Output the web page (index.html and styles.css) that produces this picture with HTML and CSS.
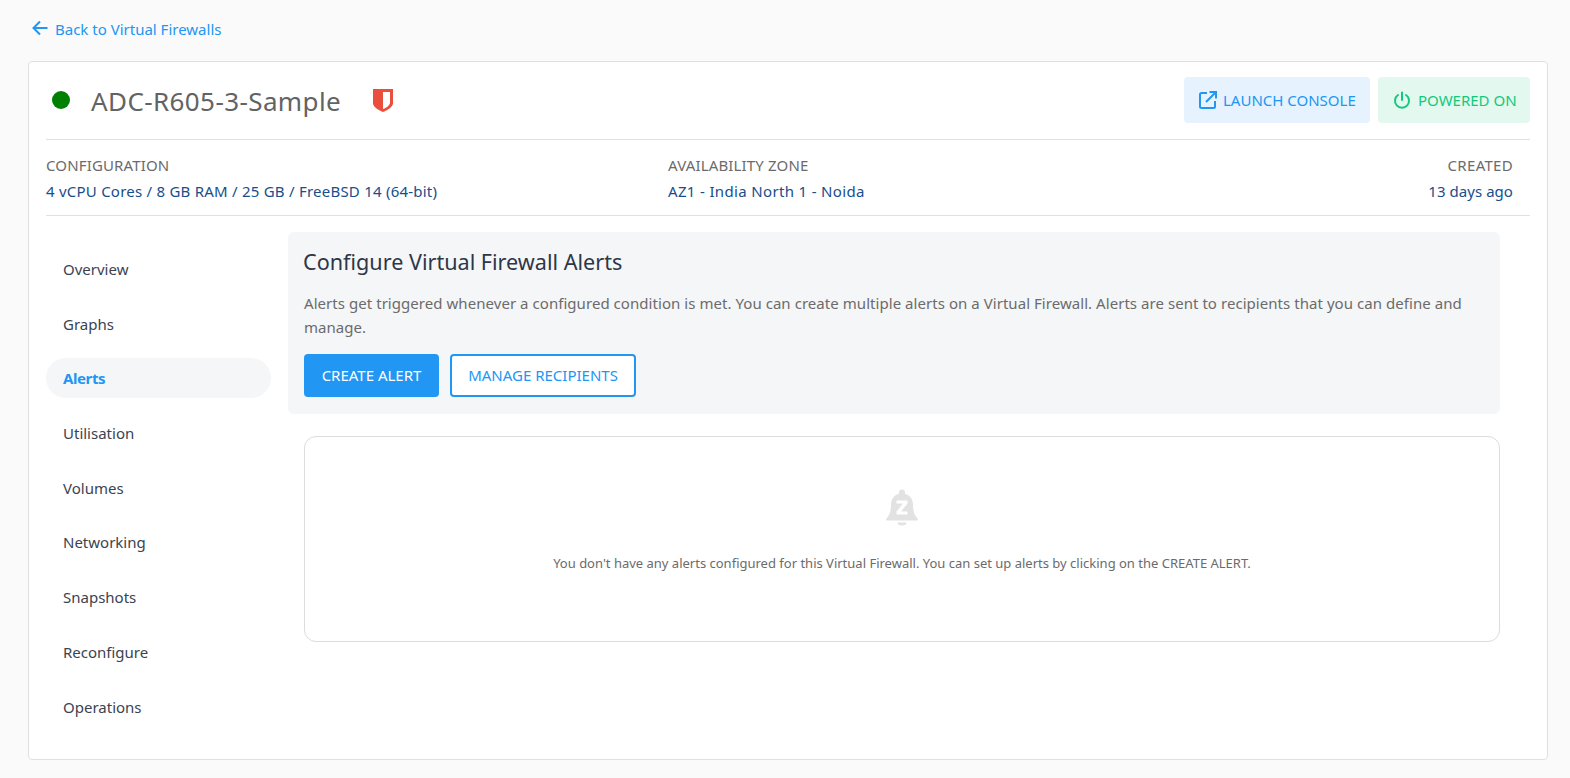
FILE: index.html
```html
<!DOCTYPE html>
<html lang="en">
<head>
<meta charset="utf-8">
<title>Alerts</title>
<link rel="stylesheet" href="styles.css">
</head>
<body>
<a class="back" href="#">
  <svg class="back-icon" viewBox="0 0 16 16" fill="none" stroke="currentColor" stroke-width="2"><path d="M15.500 8H1.500M8 1.500 1.500 8 8 14.500"/></svg>
  <span>Back to Virtual Firewalls</span>
</a>
<main class="card">
  <header class="head">
    <span class="dot"></span>
    <h1 class="name">ADC-R605-3-Sample</h1>
    <svg class="shield" viewBox="0 0 20 23"><path fill="#ea4f3d" d="M0 0h20v14c0 4-5 7-10 9C5 21 0 18 0 14z"/><path fill="#fff" d="M10 3h7v10.500c0 2.500-3 5-7 6.500z"/></svg>
    <div class="actions">
      <a class="pill pill-blue" href="#">
        <svg viewBox="0 0 18 18" fill="none" stroke="currentColor" stroke-width="2"><path d="M8 2H2.500A1.500 1.500 0 0 0 1 3.500v12A1.500 1.500 0 0 0 2.500 17h12a1.500 1.500 0 0 0 1.500-1.500V10M7 11 16 2M10.500 1H17v6.500"/></svg>
        LAUNCH CONSOLE
      </a>
      <a class="pill pill-green" href="#">
        <svg viewBox="0 0 18 18" fill="none" stroke="currentColor" stroke-width="2" stroke-linecap="round"><path d="M9 1.500V9M5 4a7 7 0 1 0 8 0"/></svg>
        POWERED ON
      </a>
    </div>
  </header>
  <section class="meta">
    <div class="meta-col meta-config"><div class="label">CONFIGURATION</div><div class="value">4 vCPU Cores / 8 GB RAM / 25 GB / FreeBSD 14 (64-bit)</div></div>
    <div class="meta-col meta-zone"><div class="label">AVAILABILITY ZONE</div><div class="value">AZ1 - India North 1 - Noida</div></div>
    <div class="meta-col meta-created"><div class="label">CREATED</div><div class="value">13 days ago</div></div>
  </section>
  <div class="body">
    <nav class="side">
      <a href="#">Overview</a>
      <a href="#">Graphs</a>
      <a href="#" class="active">Alerts</a>
      <a href="#">Utilisation</a>
      <a href="#">Volumes</a>
      <a href="#">Networking</a>
      <a href="#">Snapshots</a>
      <a href="#">Reconfigure</a>
      <a href="#">Operations</a>
    </nav>
    <div class="content">
      <section class="intro">
        <h2>Configure Virtual Firewall Alerts</h2>
        <p>Alerts get triggered whenever a configured condition is met. You can create multiple alerts on a Virtual Firewall. Alerts are sent to recipients that you can define and manage.</p>
        <div class="btns">
          <button class="btn btn-solid">CREATE ALERT</button>
          <button class="btn btn-line">MANAGE RECIPIENTS</button>
        </div>
      </section>
      <section class="empty">
        <svg class="bell" viewBox="0 0 32 36"><path fill="#e2e2e2" d="M16 0a3 3 0 0 1 3 3v1.200C24 5.500 27 10 27 15c0 7 1.500 11 4.500 14 .8.8.3 2-.8 2H1.300c-1.100 0-1.600-1.200-.8-2C3.500 26 5 22 5 15 5 10 8 5.500 13 4.200V3a3 3 0 0 1 3-3z"/><path fill="#e2e2e2" d="M11.500 33h9a4.500 3 0 0 1-9 0z"/><path fill="#fff" d="M10.500 11h11v3l-6.500 8h6.500v3h-11v-3l6.500-8h-6.500z"/></svg>
        <p>You don't have any alerts configured for this Virtual Firewall. You can set up alerts by clicking on the CREATE ALERT.</p>
      </section>
    </div>
  </div>
</main>
</body>
</html>
```
FILE: styles.css
```css
* { box-sizing: border-box; }
html, body { margin: 0; height: 100%; }
body {
  background: #fafafa;
  font-family: "Noto Sans", sans-serif;
  font-size: 15px;
  color: #6b6b6b;
  padding: 19px 22px 18px 28px;
  overflow: hidden;
}
a { text-decoration: none; color: inherit; }
.back {
  display: flex;
  align-items: center;
  gap: 7px;
  height: 20px;
  margin: 0 0 22px 4px;
  color: #2196f3;
}
.back-icon { width: 16px; height: 16px; margin-top: -2px; }
.card {
  height: 699px;
  background: #fff;
  border: 1px solid #e0e0e0;
  border-radius: 4px;
  padding: 15px 17px 0;
}
.head {
  display: flex;
  align-items: center;
  height: 63px;
  padding-bottom: 16px;
  border-bottom: 1px solid #e0e0e0;
}
.dot {
  width: 18px;
  height: 18px;
  border-radius: 50%;
  background: #008000;
  margin: -1px 0 0 6px;
}
.name {
  margin: 1px 0 0 21px;
  font-size: 26px;
  letter-spacing: 0.400px;
  font-weight: 400;
  line-height: 32px;
  color: #636363;
}
.shield { width: 20px; height: 23px; margin: 1px 0 0 32px; }
.actions { margin-left: auto; display: flex; gap: 8px; }
.pill {
  display: flex;
  align-items: center;
  height: 46px;
  border-radius: 4px;
}
.pill svg { width: 18px; height: 18px; }
.pill-blue { background: #e6f3fe; color: #2196f3; width: 186px; padding-left: 15px; gap: 6px; }
.pill-green { background: #e3f8ef; color: #12c97c; width: 152px; padding-left: 15px; gap: 7px; }
.meta {
  display: flex;
  height: 76px;
  padding: 15px 17px 0 0;
  border-bottom: 1px solid #e0e0e0;
}
.meta-col { line-height: 20px; }
.label { color: #6b6b6b; margin-bottom: 6px; letter-spacing: 0.150px; }
.value { color: #174e8c; letter-spacing: 0.230px; }
.meta-config { width: 622px; }
.meta-zone .value { letter-spacing: 0.340px; }
.meta-created { margin-left: auto; text-align: right; }
.meta-created .label { letter-spacing: 0.300px; }
.meta-created .value { letter-spacing: 0.050px; }
.body { display: flex; padding-top: 16px; }
.side { width: 225px; flex: none; display: flex; flex-direction: column; gap: 14.700px; padding-top: 17px; margin-right: 1px; }
.side a {
  display: flex;
  align-items: center;
  height: 40px;
  padding-left: 17px;
  border-radius: 20px;
  color: #3b4351;
}
.side a.active { background: #f5f6f8; color: #2196f3; font-weight: 700; letter-spacing: -0.400px; }
.content { width: 1212px; margin-left: 16px; }
.intro {
  background: #f5f6f8;
  border-radius: 6px;
  height: 182px;
  padding: 14px 16px 0;
}
.intro h2 {
  margin: 0 0 13px -1px;
  font-size: 21.600px;
  font-weight: 400;
  line-height: 32px;
  color: #2d3748;
}
.intro p { margin: 0 0 15px; line-height: 24px; color: #6b6b6b; letter-spacing: 0.050px; }
.btns { display: flex; gap: 11px; }
.btn {
  height: 43px;
  border-radius: 4px;
  font: 15px "Noto Sans", sans-serif;
  padding: 0 0 2px;
}
.btn-solid { background: #2196f3; color: #fff; border: 0; width: 135px; }
.btn-line { background: #fff; color: #2196f3; border: 2px solid #2196f3; width: 186px; }
.empty {
  margin: 22px 0 0 16px;
  height: 206px;
  border: 1px solid #dcdcdc;
  border-radius: 12px;
  display: flex;
  flex-direction: column;
  align-items: center;
  padding-top: 52px;
}
.bell { width: 32px; height: 37px; }
.empty p { margin: 28px 0 0; font-size: 13px; line-height: 18px; color: #6b6b6b; }
```
